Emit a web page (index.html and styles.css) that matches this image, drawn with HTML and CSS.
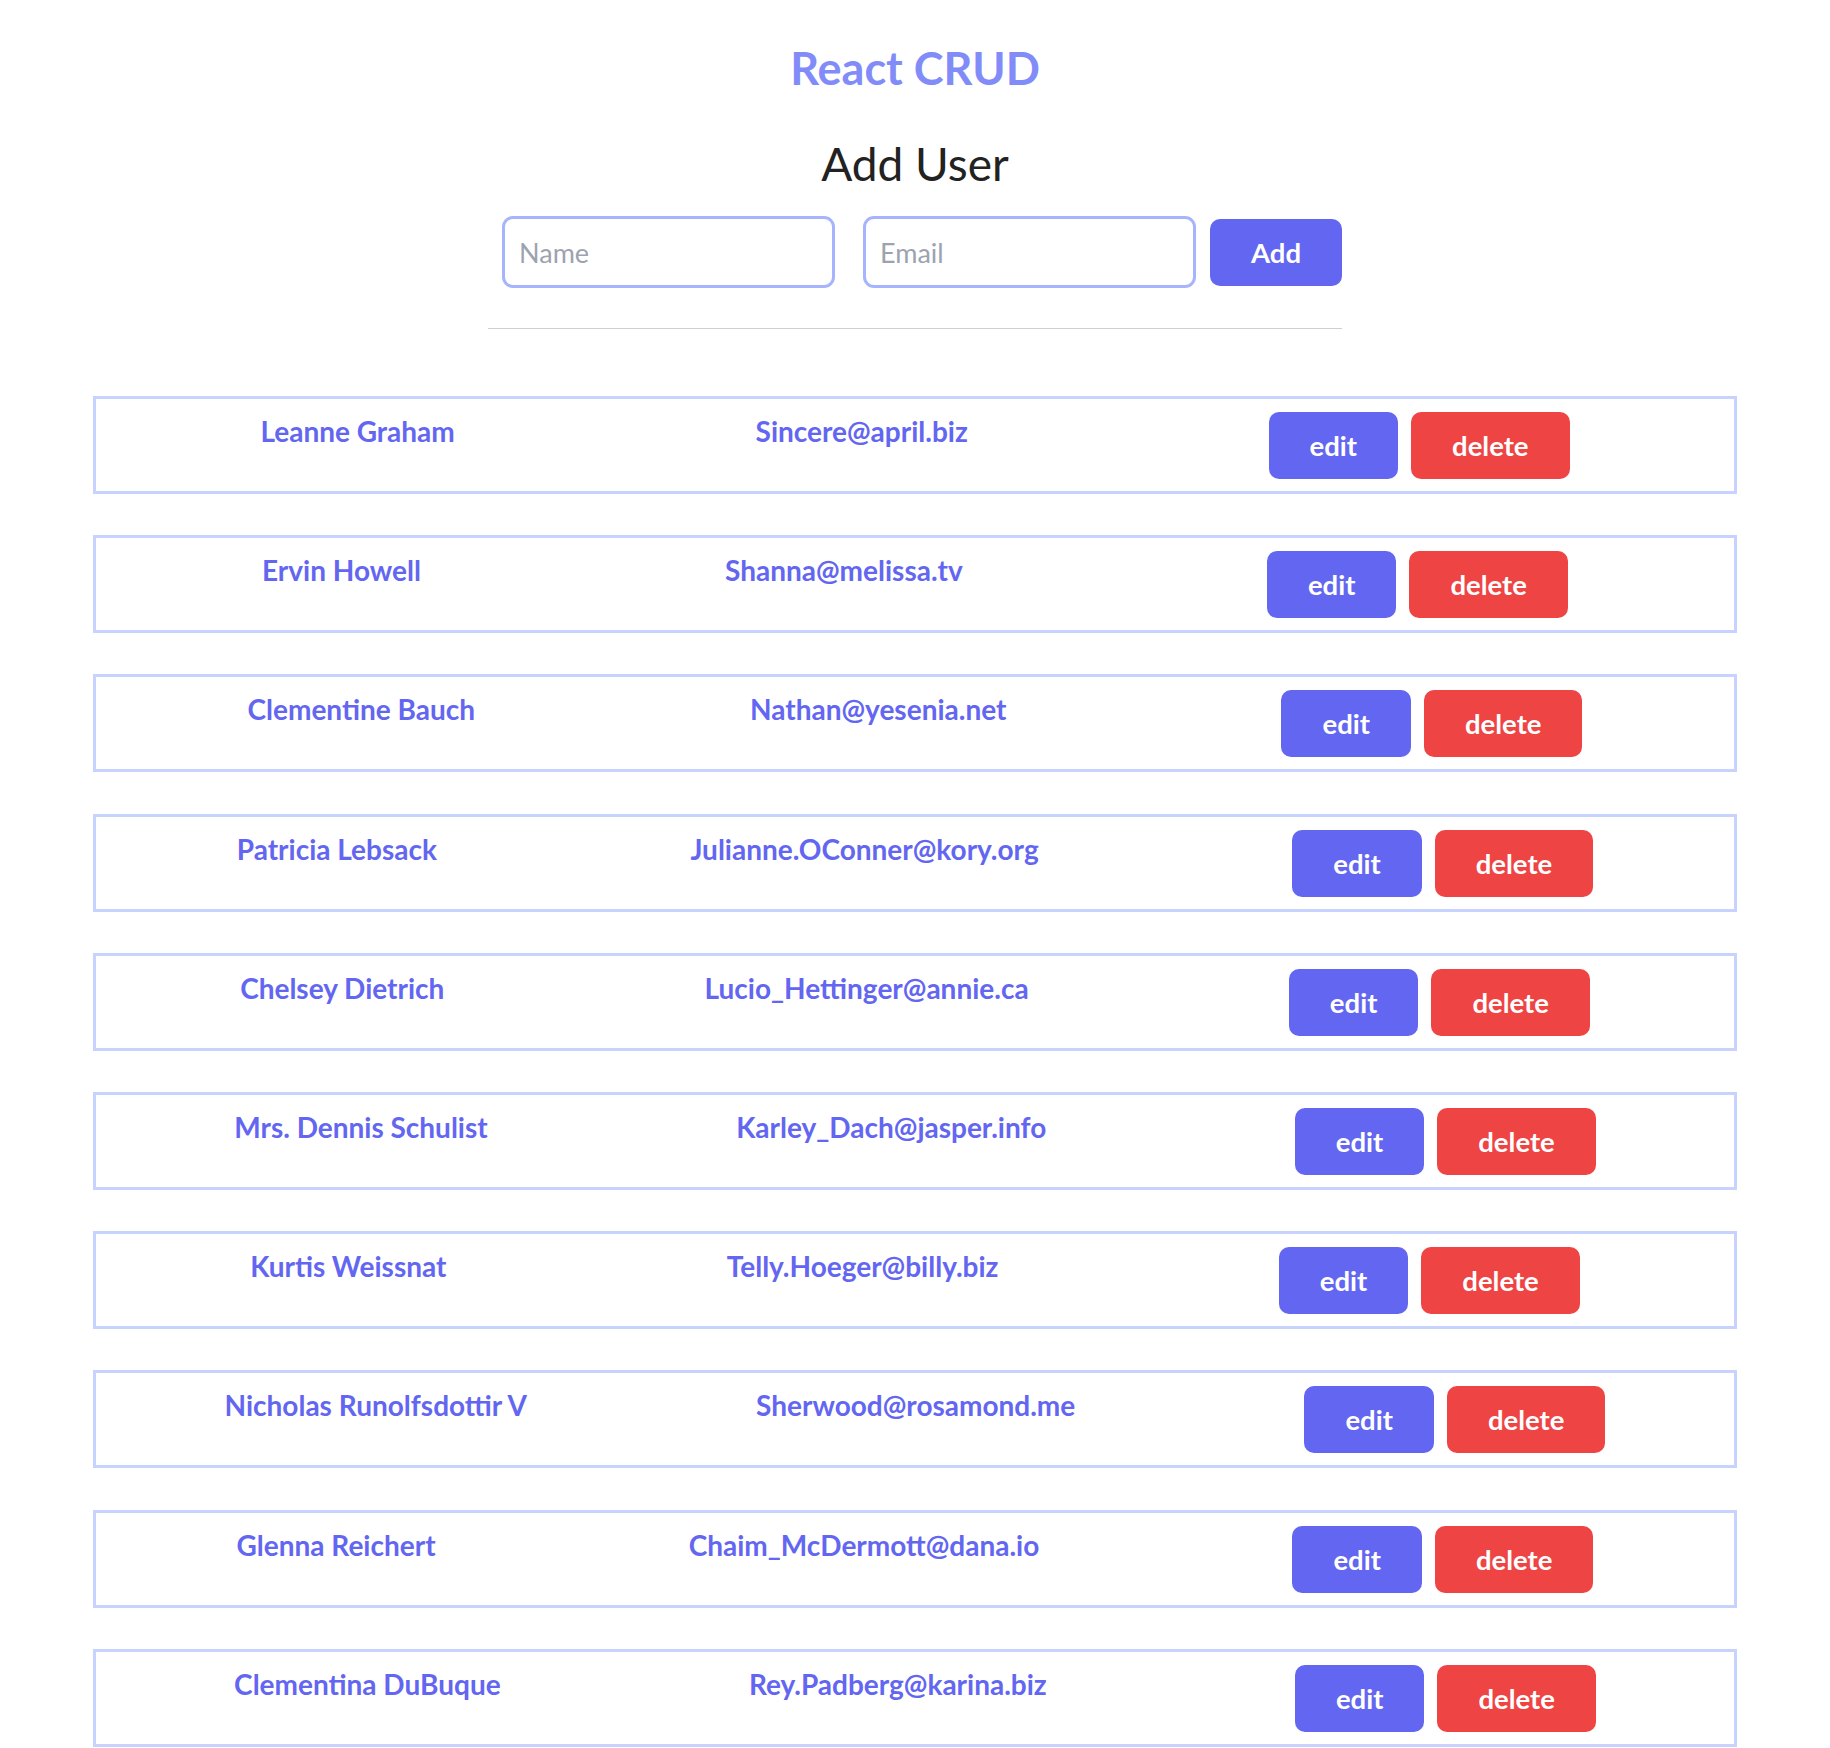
FILE: index.html
```html
<!DOCTYPE html>
<html lang="en">
<head>
<meta charset="utf-8">
<title>React CRUD</title>
<link rel="stylesheet" href="styles.css">
</head>
<body>
<div class="app">
  <h1 class="title">React CRUD</h1>
  <section class="add">
    <h2 class="add-title">Add User</h2>
    <form class="add-form">
      <input class="field" type="text" placeholder="Name">
      <input class="field" type="email" placeholder="Email">
      <button class="btn btn-primary" type="button">Add</button>
    </form>
    <hr class="divider">
  </section>
  <ul class="users">
    <li class="user"><span class="user-text">Leanne Graham</span><span class="user-text">Sincere@april.biz</span><div class="actions"><button class="btn btn-primary">edit</button><button class="btn btn-danger">delete</button></div></li>
    <li class="user"><span class="user-text">Ervin Howell</span><span class="user-text">Shanna@melissa.tv</span><div class="actions"><button class="btn btn-primary">edit</button><button class="btn btn-danger">delete</button></div></li>
    <li class="user"><span class="user-text">Clementine Bauch</span><span class="user-text">Nathan@yesenia.net</span><div class="actions"><button class="btn btn-primary">edit</button><button class="btn btn-danger">delete</button></div></li>
    <li class="user"><span class="user-text">Patricia Lebsack</span><span class="user-text">Julianne.OConner@kory.org</span><div class="actions"><button class="btn btn-primary">edit</button><button class="btn btn-danger">delete</button></div></li>
    <li class="user"><span class="user-text">Chelsey Dietrich</span><span class="user-text">Lucio_Hettinger@annie.ca</span><div class="actions"><button class="btn btn-primary">edit</button><button class="btn btn-danger">delete</button></div></li>
    <li class="user"><span class="user-text">Mrs. Dennis Schulist</span><span class="user-text">Karley_Dach@jasper.info</span><div class="actions"><button class="btn btn-primary">edit</button><button class="btn btn-danger">delete</button></div></li>
    <li class="user"><span class="user-text">Kurtis Weissnat</span><span class="user-text">Telly.Hoeger@billy.biz</span><div class="actions"><button class="btn btn-primary">edit</button><button class="btn btn-danger">delete</button></div></li>
    <li class="user"><span class="user-text">Nicholas Runolfsdottir V</span><span class="user-text">Sherwood@rosamond.me</span><div class="actions"><button class="btn btn-primary">edit</button><button class="btn btn-danger">delete</button></div></li>
    <li class="user"><span class="user-text">Glenna Reichert</span><span class="user-text">Chaim_McDermott@dana.io</span><div class="actions"><button class="btn btn-primary">edit</button><button class="btn btn-danger">delete</button></div></li>
    <li class="user"><span class="user-text">Clementina DuBuque</span><span class="user-text">Rey.Padberg@karina.biz</span><div class="actions"><button class="btn btn-primary">edit</button><button class="btn btn-danger">delete</button></div></li>
  </ul>
</div>
</body>
</html>
```
FILE: styles.css
```css
* { box-sizing: border-box; }
html, body { margin: 0; padding: 0; background: #fff; }
body { font-family: Lato, "Open Sans", sans-serif; color: #222; }
.app { padding: 41px 0 0; }
.title { margin: 0; text-align: center; color: #818cf8; font-size: 45px; font-weight: 700; line-height: 54px; }
.add { display: flex; flex-direction: column; align-items: center; margin-top: 41px; }
.add-title { margin: 0; font-size: 46px; font-weight: 400; line-height: 55px; color: #222; }
.add-form { display: flex; align-items: center; width: 854px; margin-top: 25px; }
.field { flex: 1; min-width: 0; height: 72px; margin: 0 14px; padding: 0 14px; border: 3px solid #a5b4fc; border-radius: 11px; font-family: inherit; font-size: 27px; color: #222; background: #fff; outline: none; }
.field::placeholder { color: #9ca3af; }
.btn { border: 0; border-radius: 10px; color: #fff; font-family: inherit; font-size: 27.5px; font-weight: 700; height: 67px; padding: 0 41px; cursor: pointer; }
.btn-primary { background: #6366f1; }
.btn-danger { background: #ef4444; }
.divider { width: 854px; margin: 40px 0 0; border: 0; border-top: 1px solid #cfcfcf; }
.users { list-style: none; margin: 67px 0 0; padding: 0 93px; display: flex; flex-direction: column; gap: 41.2px; }
.user { display: flex; justify-content: space-around; align-items: flex-start; border: 3px solid #c7d2fe; padding: 13px 14px 12px; }
.user-text { color: #6366f1; font-size: 28px; font-weight: 700; line-height: 38px; }
.actions { display: flex; gap: 13px; }
```
